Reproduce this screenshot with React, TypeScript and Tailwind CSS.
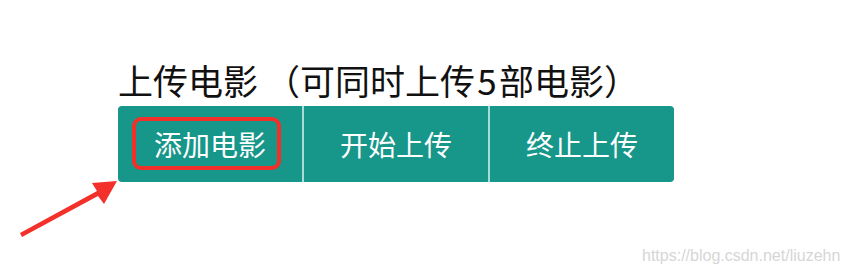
import React from "react";

export default function App() {
  const font = { fontFamily: '"Noto Sans CJK SC", "Noto Sans", sans-serif' };
  return (
    <div className="relative w-[848px] h-[274px] bg-white overflow-hidden" style={font}>
      <div className="flex flex-col pl-[118px] pt-[60px]">
        <h1 className="text-[35px] leading-[40px] text-[#111] font-normal whitespace-nowrap">
          上传电影<span className="inline-block w-[42px] text-right">（</span>可同时上传<span className="inline-block w-[24px] text-center">5</span>部电影<span className="inline-block w-[35px] text-left">）</span>
        </h1>
        <div className="relative mt-[6px] flex w-[556px] h-[76px] rounded-[4px] bg-[#17968a] text-white text-[28px]">
          <button className="relative flex-1 flex items-center justify-center">
            添加电影
            <span className="absolute left-[14px] top-[11px] w-[149px] h-[53px] rounded-[9px] border-[4px] border-[#f2302a]" />
          </button>
          <div className="w-[2px] bg-[#a8dcd4]" />
          <button className="flex-1 flex items-center justify-center">开始上传</button>
          <div className="w-[2px] bg-[#a8dcd4]" />
          <button className="flex-1 flex items-center justify-center">终止上传</button>
        </div>
      </div>
      <svg className="absolute left-0 top-0" width="848" height="274" viewBox="0 0 848 274">
        <path d="M22 237 L98 196 L104 204 L117 181 L92 183 L97 191 L20 233 Z" fill="#f3302a" strokeLinejoin="round" />
      </svg>
      <div
        className="absolute left-[642px] top-[246px] text-[16px] leading-[20px] text-[#d6d6d6]"
        style={{ fontFamily: '"Liberation Sans", Arial, sans-serif' }}
      >
        https://blog.csdn.net/liuzehn
      </div>
    </div>
  );
}
